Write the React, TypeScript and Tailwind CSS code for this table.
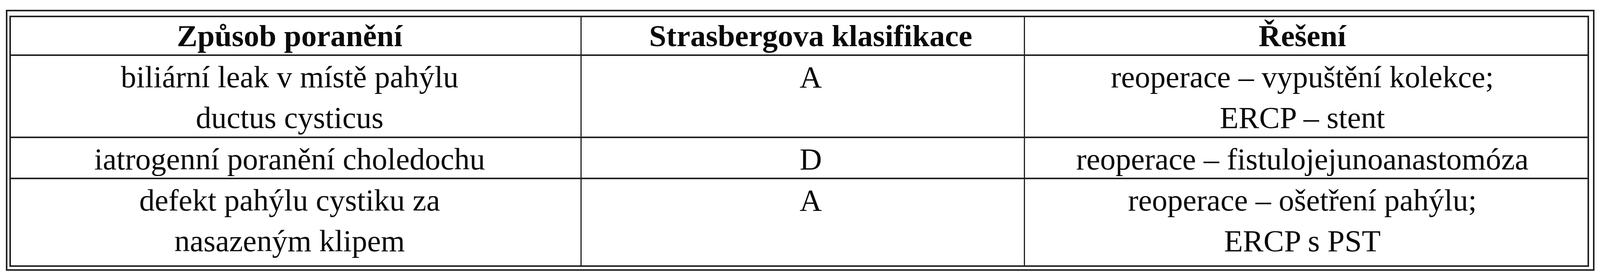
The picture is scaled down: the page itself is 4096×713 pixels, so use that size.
import React from "react";

const rows: { c1: string[]; c2: string; c3: string[]; h: string }[] = [
  {
    c1: ["biliární leak v místě pahýlu", "ductus cysticus"],
    c2: "A",
    c3: ["reoperace – vypuštění kolekce;", "ERCP – stent"],
    h: "h-[210px] border-b-4",
  },
  {
    c1: ["iatrogenní poranění choledochu"],
    c2: "D",
    c3: ["reoperace – fistulojejunoanastomóza"],
    h: "h-[105px] border-b-4",
  },
  {
    c1: ["defekt pahýlu cystiku za", "nasazeným klipem"],
    c2: "A",
    c3: ["reoperace – ošetření pahýlu;", "ERCP s PST"],
    h: "h-[220px]",
  },
];

export default function App() {
  return (
    <div className="w-[4096px] h-[713px] bg-white pt-[25px] pl-[15px] font-['Liberation_Serif','Times_New_Roman',serif] text-[79px] text-[#0a0a0a]">
      <div className="w-[4067px] border-4 border-[#222] pt-[11px] pl-[5px] pr-[10px] pb-[6px]">
        <div className="border-4 border-[#222] grid grid-cols-[1461px_1135px_1fr]">
          <div className="h-[99px] border-b-4 border-r-[3px] border-[#222] text-center font-bold leading-[95px] pr-[31px] whitespace-nowrap">
            Způsob poranění
          </div>
          <div className="h-[99px] border-b-4 border-r-[3px] border-[#222] text-center font-bold leading-[95px] pl-[41px] whitespace-nowrap">
            Strasbergova klasifikace
          </div>
          <div className="h-[99px] border-b-4 border-[#222] text-center font-bold leading-[95px] pr-[20px] whitespace-nowrap">
            Řešení
          </div>
          {rows.map((r, i) => (
            <React.Fragment key={i}>
              <div className={`${r.h} border-r-[3px] border-[#222] text-center leading-[104px] pt-[2px] pr-[31px] whitespace-nowrap`}>
                {r.c1.map((t, j) => (
                  <div key={j}>{t}</div>
                ))}
              </div>
              <div className={`${r.h} border-r-[3px] border-[#222] text-center leading-[104px] pt-[2px] pl-[41px] whitespace-nowrap`}>
                {r.c2}
              </div>
              <div className={`${r.h} border-[#222] text-center leading-[104px] pt-[2px] pr-[20px] whitespace-nowrap`}>
                {r.c3.map((t, j) => (
                  <div key={j}>{t}</div>
                ))}
              </div>
            </React.Fragment>
          ))}
        </div>
      </div>
    </div>
  );
}
